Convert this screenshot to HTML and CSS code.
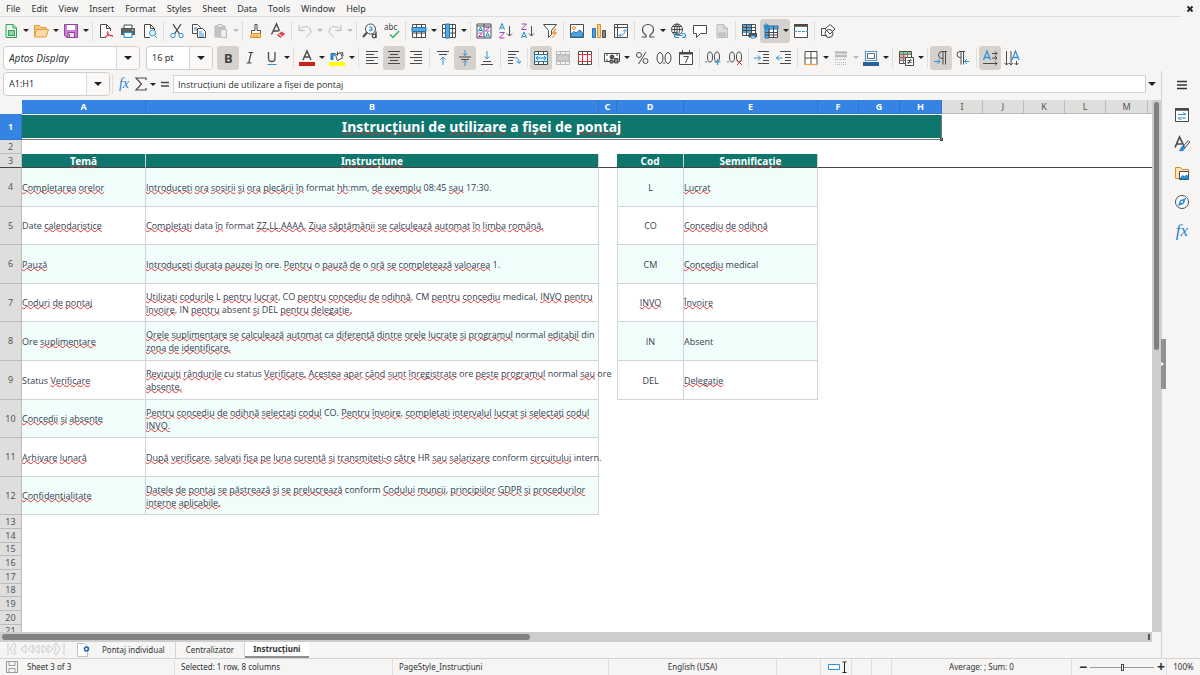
FILE: index.html
```html
<!DOCTYPE html>
<html lang="ro">
<head>
<meta charset="utf-8">
<title>Instrucțiuni</title>
<link rel="stylesheet" href="styles.css">
</head>
<body>
<header class="menubar">
  <nav class="menus">
    <button>File</button><button>Edit</button><button>View</button><button>Insert</button><button>Format</button><button>Styles</button><button>Sheet</button><button>Data</button><button>Tools</button><button>Window</button><button>Help</button>
  </nav>
  <button class="close" aria-label="Close"><svg viewBox="0 0 8 8"><path d="M1.500 1.500l5 5M6.500 1.500l-5 5" stroke="#222" stroke-width="1.800"/></svg></button>
</header>

<div class="toolbar standard">
  <button class="tool" aria-label="New"><svg viewBox="0 0 16 16"><path d="M3 1.500h7l3.500 3.500v9.500H3z" fill="#e9f7ee" stroke="#2da44e"/><path d="M10 1.500v3.500h3.500" stroke="#2da44e"/><path d="M5 7h7v6H5z" fill="#2da44e" stroke="none"/><path d="M6 9h5M6 11h5" stroke="#fff"/></svg></button><button class="caret" aria-label="More"></button>
  <button class="tool" aria-label="Open"><svg viewBox="0 0 16 16"><path d="M1.500 13.500v-11h5l1.500 2h5v2" fill="#f6c783" stroke="#e39b33"/><path d="M3.500 6.500h12l-2.500 7.500H1.500z" fill="#fbdba8" stroke="#e39b33"/></svg></button><button class="caret" aria-label="More"></button>
  <button class="tool" aria-label="Save"><svg viewBox="0 0 16 16"><path d="M1.500 1.500h13v13h-11l-2-2z" fill="#c583d0" stroke="#94409f"/><path d="M4 2h8v5H4z" fill="#fff" stroke="none"/><path d="M5 9.500h6.500v5H5z" fill="#f3e3f6" stroke="#94409f"/><path d="M6.500 11v3" stroke="#94409f"/></svg></button><button class="caret" aria-label="More"></button>
  <i class="sep"></i>
  <button class="tool" aria-label="Export as PDF"><svg viewBox="0 0 16 16"><path d="M8 14.500H2.500v-13h6l4 4V8M8.500 1.500v4h4" fill="#fff"/><path d="M7 14.500c3-2 4-6 2.500-6s0 4.500 5.500 4.500c-3-1.500-6-.5-8 1.500" stroke="#d9333f"/></svg></button>
  <button class="tool" aria-label="Print"><svg viewBox="0 0 16 16"><path d="M4 5V2h8v3" fill="#fff"/><path d="M1.500 5.500h13v6h-13z" fill="#5d6468" stroke="#4f565b"/><path d="M4 9.500h8v5H4z" fill="#eaf5fc" stroke="#2f8fd0"/><path d="M12 7h1.500" stroke="#fff"/></svg></button>
  <button class="tool" aria-label="Print Preview"><svg viewBox="0 0 16 16"><path d="M12.500 7V5.500l-4-4h-6v13H8M8.500 1.500v4h4" fill="#fff"/><circle cx="10.500" cy="10" r="3" fill="#e4f3fc" stroke="#2f93d6"/><path d="M12.500 12.500l2.500 2.500" stroke="#2f93d6"/></svg></button>
  <i class="sep"></i>
  <button class="tool" aria-label="Cut"><svg viewBox="0 0 16 16"><path d="M4 1l6.500 10M12 1L5.500 11" stroke-width="1.300"/><circle cx="4" cy="12.500" r="2.200" stroke="#2f93d6"/><circle cx="12" cy="12.500" r="2.200" stroke="#2f93d6"/></svg></button>
  <button class="tool" aria-label="Copy"><svg viewBox="0 0 16 16"><path d="M1.500 1.500h5l3 3v6h-8z" fill="#fff"/><path d="M6.500 5.500h5l3 3v6h-8z" fill="#fff"/><path d="M3 5h3M3 7h3M8 9h3M8 11h5M8 13h5" stroke="#2f93d6"/></svg></button>
  <button class="tool off" aria-label="Paste"><svg viewBox="0 0 16 16"><path d="M2 3h10v11H2z" fill="#c6c4c2"/><path d="M5 1.500h4v3H5z" fill="#eee"/><path d="M7.500 6.500h6v8h-6z" fill="#eee"/></svg></button><button class="caret off" aria-label="More"></button>
  <i class="sep"></i>
  <button class="tool" aria-label="Clone Formatting"><svg viewBox="0 0 16 16"><path d="M7 1.500h2v6h3.500v3h-9v-3H7z" fill="#fff"/><path d="M3.500 10.500h9v4h-10z" fill="#f9cf8d" stroke="#e08d1f"/><path d="M6 12v2M9 12v2" stroke="#e08d1f"/></svg></button>
  <button class="tool" aria-label="Clear Direct Formatting"><svg viewBox="0 0 16 16"><path d="M1.500 11.500L6.500 1 9.500 8M3.500 8h5" stroke-width="1.400"/><path d="M7.500 12l4-3 3 2-4 3.500z" fill="#e2454f" stroke="#e2454f"/><path d="M9 11l3 2.500" stroke="#fff"/></svg></button>
  <i class="sep"></i>
  <button class="tool off" aria-label="Undo"><svg viewBox="0 0 16 16"><path d="M2 2v5.500h5.500M2 7.500C5 3 10 2.500 12.500 5s1.500 6-3.500 9"/></svg></button><button class="caret off" aria-label="More"></button>
  <button class="tool off" aria-label="Redo"><svg viewBox="0 0 16 16"><path d="M14 2v5.500H8.500M14 7.500C11 3 6 2.500 3.500 5s-1.500 6 3.500 9"/></svg></button><button class="caret off" aria-label="More"></button>
  <i class="sep"></i>
  <button class="tool" aria-label="Find and Replace"><svg viewBox="0 0 16 16"><circle cx="8.500" cy="6" r="5" fill="#fff"/><path d="M5 9.500L1 14" stroke-width="2"/><path d="M7 4.500c1-1 3-1 3 .5v3M10 6c-3-.3-3.500 2-1.800 2 .8 0 1.500-.5 1.800-1" stroke="#1e8bcd"/><path d="M14 8.500v6.500" stroke-width="1.400"/><circle cx="12" cy="13" r="1.800" fill="#f6f5f4" stroke-width="1.300"/></svg></button>
  <button class="tool" aria-label="Spelling"><svg viewBox="0 0 16 16"><text x="0" y="7" font-size="8">abc</text><path d="M6 11.500l3 3L15 8" stroke="#27b35c" stroke-width="1.400"/></svg></button>
  <i class="sep"></i>
  <button class="tool" aria-label="Row"><svg viewBox="0 0 16 16"><path d="M1.500 1.500h13v13h-13zM1.500 10h13M5.500 1.500v13M10.500 1.500v13" fill="#fff"/><path d="M1 4.500h14v4H1z" fill="#58a9df" stroke="#1e74b8"/></svg></button><button class="caret" aria-label="More"></button>
  <button class="tool" aria-label="Column"><svg viewBox="0 0 16 16"><path d="M1.500 1.500h13v13h-13zM1.500 5.500h13M1.500 10h13M11.500 1.500v13" fill="#fff"/><path d="M4.500 1h4v14h-4z" fill="#58a9df" stroke="#1e74b8"/></svg></button><button class="caret" aria-label="More"></button>
  <i class="sep"></i>
  <button class="tool" aria-label="Sort"><svg viewBox="0 0 16 16"><path d="M1 3V1h14v14H1V3h14M8 1v14" fill="#fff"/><path d="M2.500 8.500L4.500 4l2 4.500M3 7.500h3M9.500 14L11.500 9.500l2 4.500M10 13h3" stroke="#1e8bcd"/><path d="M2.500 10h4l-4 3.500h4M9.500 4.500h4l-4 3.500h4" stroke="#a844b8"/></svg></button>
  <button class="tool" aria-label="Sort Ascending"><svg viewBox="0 0 16 16"><path d="M1.500 6.500L4 .5l2.500 6M2.500 5h3" stroke="#1e8bcd"/><path d="M1.500 9.500h5l-5 5.500h5" stroke="#a844b8"/><path d="M11.500 3v10M9 10.500l2.500 2.500 2.500-2.500"/></svg></button>
  <button class="tool" aria-label="Sort Descending"><svg viewBox="0 0 16 16"><path d="M1.500 15L4 9l2.500 6M2.500 13.500h3" stroke="#1e8bcd"/><path d="M1.500 1h5l-5 5.500h5" stroke="#a844b8"/><path d="M11.500 3v10M9 10.500l2.500 2.500 2.500-2.500"/></svg></button>
  <button class="tool" aria-label="AutoFilter"><svg viewBox="0 0 16 16"><path d="M1.500 1.500h13l-5 6v4l-3 3v-7z" fill="#fff"/><path d="M13 6l-3 4.500h3L10 15l5-5.500h-3L14 6z" fill="#f28c28" stroke="#f28c28" stroke-width=".5"/></svg></button>
  <i class="sep"></i>
  <button class="tool" aria-label="Insert Image"><svg viewBox="0 0 16 16"><path d="M1.500 1.500h13v13h-13z" fill="#fff"/><circle cx="5" cy="5" r="1.500" stroke="#f28c28"/><path d="M2 14v-3l3-2.500 2 1.500 4-3 3 4v3z" fill="#4fa3dc" stroke="#1e74b8"/></svg></button>
  <button class="tool" aria-label="Insert Chart"><svg viewBox="0 0 16 16"><path d="M1.500 5.500h3v9h-3z" fill="#4fa3dc" stroke="#1e74b8"/><path d="M6.500 1.500h3v13h-3z" fill="#f9cf8d" stroke="#e08d1f"/><path d="M11.500 7.500h3v7h-3z" fill="#888"/></svg></button>
  <button class="tool" aria-label="Pivot Table"><svg viewBox="0 0 16 16"><path d="M1.500 1.500h13v13h-13zM1.500 4.500h13M4.500 1.500v13" fill="#fff"/><path d="M6.500 12.500c4 0 5.500-2 5.500-5.500M10 8.500L12 6.500l2 2M8 10.500l-2 2 2 2" stroke="#2f93d6"/></svg></button>
  <i class="sep"></i>
  <button class="tool" aria-label="Special Character"><svg viewBox="0 0 16 16"><path d="M1.500 14h4.500v-2C3.500 10.500 2.500 9 2.500 6.500c0-3 2.300-5 5.500-5s5.500 2 5.500 5c0 2.500-1 4-3.500 5.500v2h4.500" stroke-width="1.200"/></svg></button><button class="caret" aria-label="More"></button>
  <button class="tool" aria-label="Hyperlink"><svg viewBox="0 0 16 16"><circle cx="7" cy="6.500" r="5.500"/><path d="M1.500 6.500h11M7 1v10M3 3.500h8M3 9.500h4"/><ellipse cx="7" cy="6.500" rx="2.500" ry="5.500"/><path d="M9 10.500H6.500a2 2 0 0 0 0 4H9m3-4h1.500a2 2 0 0 1 0 4H12M8.500 12.500h4" stroke="#2f93d6" stroke-width="1.200"/></svg></button>
  <button class="tool" aria-label="Comment"><svg viewBox="0 0 16 16"><path d="M1.500 2.500h13v8h-6l-4 4v-4h-3z" fill="#fff"/></svg></button>
  <button class="tool off" aria-label="Headers and Footers"><svg viewBox="0 0 16 16"><path d="M3 1.500h6.500l4 4v9H3z" fill="#ddd"/><path d="M9.500 1.500v4h4"/><path d="M5 10h6.500v3H5z" fill="#c6c4c2"/></svg></button>
  <i class="sep"></i>
  <button class="tool" aria-label="Define Print Area"><svg viewBox="0 0 16 16"><path d="M1.500 1.500h13v11h-13z" fill="#fff"/><path d="M2 2h9v8H2z" fill="#58a9df" stroke="none"/><path d="M1.500 4.500h13M1.500 7.500h13M5.500 1.500v11M10.500 1.500v9"/><path d="M8 10.500h7.500v3.500H8z" fill="#4f565b"/><path d="M10 13h4v2h-4z" fill="#fff" stroke="#2f8fd0"/></svg></button>
  <span class="pair on"><button class="tool" aria-label="Freeze Rows and Columns"><svg viewBox="0 0 16 16"><path d="M2.500 3.500h12v11h-12z" fill="#fff"/><path d="M2 3h13v3H2zM2 3h4v12H2z" fill="#58a9df" stroke="#1e74b8"/><path d="M2 9.500h13M2 12h13M10.500 3v12M6 6v9"/><path d="M3 0v6M0 3h6M1 1l4 4M5 1L1 5" stroke="#1e8bcd" stroke-width=".8"/></svg></button><button class="caret" aria-label="More"></button></span>
  <button class="tool" aria-label="Split Window"><svg viewBox="0 0 16 16"><path d="M1.500 1.500h13v13h-13z" fill="#fff"/><path d="M1 2.500h14" stroke-width="2.500"/><path d="M1 8.500h14" stroke="#2f93d6" stroke-dasharray="3 1"/></svg></button>
  <i class="sep"></i>
  <button class="tool" aria-label="Show Draw Functions"><svg viewBox="0 0 16 16"><path d="M7 12.500H1.500v-7h4"/><path d="M10 1.500l5 4.500-5 5-5-5z" fill="#f6f5f4"/><circle cx="9" cy="10.500" r="4"/></svg></button>
</div>

<div class="toolbar formatting">
  <div class="combo font"><input aria-label="Font Name" value="Aptos Display"><button class="caret" aria-label="Fonts"></button></div>
  <div class="combo size"><input aria-label="Font Size" value="16 pt"><button class="caret" aria-label="Sizes"></button></div>
  <button class="tool on" aria-label="Bold"><svg viewBox="0 0 16 16"><text x="4" y="13" font-size="13" font-weight="700">B</text></svg></button>
  <button class="tool" aria-label="Italic"><svg viewBox="0 0 16 16"><path d="M6.500 2.500h5M4.500 13h5M9.200 2.500L6.800 13" stroke-width="1.200"/></svg></button>
  <button class="tool" aria-label="Underline"><svg viewBox="0 0 16 16"><path d="M4.500 2v6.500c0 4 6.500 4 6.500 0V2" stroke-width="1.300"/><path d="M3.500 14.500h9" stroke="#2f93d6"/></svg></button><button class="caret" aria-label="More"></button>
  <i class="sep"></i>
  <button class="tool" aria-label="Font Color"><svg viewBox="0 0 16 16"><path d="M4 10L8 1l4 9M5.500 7h5" stroke-width="1.500"/><path d="M0 12h16v4H0z" fill="#c9211e" stroke="none"/></svg></button><button class="caret" aria-label="More"></button>
  <button class="tool" aria-label="Background Color"><svg viewBox="0 0 16 16"><path d="M6.500 5l5-2.500L13.500 8 8.500 10.500z" fill="#fff"/><path d="M8.500 5.500V1.500M12 3.500l1.500-1.500.5 4"/><path d="M2 9.500V3.500h4.500L4 6.500v3z" fill="#2f93d6" stroke="#1e74b8"/><path d="M0 12h16v4H0z" fill="#ffff00" stroke="none"/></svg></button><button class="caret" aria-label="More"></button>
  <i class="sep"></i>
  <button class="tool" aria-label="Align Left"><svg viewBox="0 0 16 16"><path d="M2 1.500h12M2 4.500h8M2 7.500h12M2 10.500h8M2 13.500h12"/></svg></button>
  <button class="tool on" aria-label="Center Horizontally"><svg viewBox="0 0 16 16"><path d="M2 1.500h12M4 4.500h8M2 7.500h12M4 10.500h8M2 13.500h12"/></svg></button>
  <button class="tool" aria-label="Align Right"><svg viewBox="0 0 16 16"><path d="M2 1.500h12M6 4.500h8M2 7.500h12M6 10.500h8M2 13.500h12"/></svg></button>
  <i class="sep"></i>
  <button class="tool" aria-label="Align Top"><svg viewBox="0 0 16 16"><path d="M2 1.500h12M4 4.500h8"/><path d="M8 15V7M5.500 9.500L8 7l2.500 2.500" stroke="#2f93d6"/></svg></button>
  <button class="tool on" aria-label="Center Vertically"><svg viewBox="0 0 16 16"><path d="M2 7h12M4 9.500h8"/><path d="M8 0v5.500M6 3.500l2 2 2-2M8 16v-5.500M6 12.500l2-2 2 2" stroke="#2f93d6"/></svg></button>
  <button class="tool" aria-label="Align Bottom"><svg viewBox="0 0 16 16"><path d="M4 11.500h8M2 14.500h12"/><path d="M8 1v8M5.500 6.500L8 9l2.500-2.500" stroke="#2f93d6"/></svg></button>
  <i class="sep"></i>
  <button class="tool" aria-label="Wrap Text"><svg viewBox="0 0 16 16"><path d="M2 1.500h11M2 4.500h8M2 7.500h6M2 10.500h5M2 13.500h5"/><path d="M8 8c4-1 5 1 5 5M10.500 11L13 13.500 15 11" stroke="#2f93d6"/></svg></button>
  <i class="sep"></i>
  <button class="tool on" aria-label="Merge and Center Cells"><svg viewBox="0 0 16 16"><path d="M1.500 1.500h13v13h-13zM1.500 4.500h13M1.500 11.500h13M5.500 1.500v3M10.500 1.500v3M5.500 11.500v3M10.500 11.500v3" fill="#fff"/><path d="M1.500 4.500h13v7h-13z" fill="#dff0fb" stroke="#1e74b8"/><path d="M3 8h10M5 6L3 8l2 2M11 6l2 2-2 2" stroke="#1e8bcd"/></svg></button>
  <button class="tool off" aria-label="Merge Cells"><svg viewBox="0 0 16 16"><path d="M1.500 1.500h13v13h-13zM1.500 4.500h13M1.500 11.500h13M5.500 1.500v3M10.500 1.500v3M5.500 11.500v3M10.500 11.500v3"/><path d="M2 5h12v6H2z" fill="#ccc"/></svg></button>
  <button class="tool" aria-label="Unmerge Cells"><svg viewBox="0 0 16 16"><path d="M1.500 1.500h13v13h-13zM5.500 1.500v13M10.500 1.500v13" fill="#fff"/><path d="M1.500 4.500h13v7h-13zM5.500 4.500v7M10.500 4.500v7" fill="#fff" stroke="#d9333f"/></svg></button>
  <i class="sep"></i>
  <button class="tool" aria-label="Format as Currency"><svg viewBox="0 0 16 16"><path d="M.5 3.500h15v8H.5z" fill="#fff"/><circle cx="8" cy="7" r="2" fill="#555"/><path d="M2 5h2M12 5h2M2 10h2"/><path d="M6 13V10h3v3zM10.500 13V8.500h3.500V13z" fill="#888"/></svg></button><button class="caret" aria-label="More"></button>
  <button class="tool" aria-label="Format as Percent"><svg viewBox="0 0 16 16"><circle cx="5" cy="5" r="2.500"/><circle cx="11.500" cy="11" r="2.500"/><path d="M12 2L4.500 14"/></svg></button>
  <button class="tool" aria-label="Format as Number"><svg viewBox="0 0 16 16"><ellipse cx="4" cy="8" rx="3" ry="5.500"/><ellipse cx="12" cy="8" rx="3" ry="5.500"/><path d="M8 12v2"/></svg></button>
  <button class="tool" aria-label="Format as Date"><svg viewBox="0 0 16 16"><path d="M1.500 2.500h13v12h-13zM4.500 0v3M11.500 0v3" fill="#fff"/><path d="M1 3.500h14" stroke-width="2"/><path d="M5.500 6.500h5L7.500 13"/></svg></button>
  <i class="sep"></i>
  <button class="tool" aria-label="Add Decimal Place"><svg viewBox="0 0 16 16"><ellipse cx="5" cy="7" rx="2.500" ry="5"/><ellipse cx="12" cy="7" rx="2.500" ry="5"/><path d="M1 11v1.500"/><path d="M12.500 9v6M9.500 12h6" stroke="#2f93d6" stroke-width="1.200"/></svg></button>
  <button class="tool" aria-label="Delete Decimal Place"><svg viewBox="0 0 16 16"><ellipse cx="5" cy="7" rx="2.500" ry="5"/><ellipse cx="12" cy="7" rx="2.500" ry="5"/><path d="M1 11v1.500"/><path d="M10 10l5 5M15 10l-5 5" stroke="#d9333f"/></svg></button>
  <i class="sep"></i>
  <button class="tool" aria-label="Increase Indent"><svg viewBox="0 0 16 16"><path d="M4 1.500h11M9 4.500h6M9 7.500h6M9 10.500h6M4 13.500h11"/><path d="M0 8h6.500M4 5.500L6.500 8 4 10.500" stroke="#2f93d6"/></svg></button>
  <button class="tool" aria-label="Decrease Indent"><svg viewBox="0 0 16 16"><path d="M4 1.500h11M9 4.500h6M9 7.500h6M9 10.500h6M4 13.500h11"/><path d="M0 8h6.500M3 5.500L.5 8 3 10.500" stroke="#2f93d6"/></svg></button>
  <i class="sep"></i>
  <button class="tool" aria-label="Borders"><svg viewBox="0 0 16 16"><path d="M2 14.500v-13h12v13M8 1.500v13M2 8h12" fill="#fff"/><path d="M1.500 14.500h13" stroke="#f0a347" stroke-width="1.300"/></svg></button><button class="caret" aria-label="More"></button>
  <button class="tool off" aria-label="Border Style"><svg viewBox="0 0 16 16"><path d="M2 2.500h12M2 6h12" stroke-width="2.500"/><path d="M2 9.500h12" stroke-dasharray="3 1"/><path d="M2 12.500h12M2 14.500h12" stroke-dasharray="1 1"/></svg></button><button class="caret off" aria-label="More"></button>
  <button class="tool" aria-label="Border Color"><svg viewBox="0 0 16 16"><path d="M2.500 1.500h11v9h-11z" fill="#fff" stroke="#4a9ad0" stroke-width="1.200"/><path d="M4.500 3.500h7v5h-7z" fill="#fff" stroke="#666"/><path d="M0 12h16v4H0z" fill="#2a6099" stroke="none"/></svg></button><button class="caret" aria-label="More"></button>
  <i class="sep"></i>
  <button class="tool" aria-label="Conditional"><svg viewBox="0 0 16 16"><path d="M1.500 1.500h12v12h-12z" fill="#fff"/><path d="M2 2h11v3H2z" fill="#7fd191" stroke="none"/><path d="M2 5h6v5H2z" fill="#f7a79f" stroke="none"/><path d="M1.500 4.500h12M1.500 7.500h12M1.500 10.500h12M5.500 1.500v12M9.500 1.500v12" stroke="#777"/><path d="M7.500 7.500h8v8h-8z" fill="#fff"/><path d="M9.500 10.500h4M9.500 12.500h4M13 9l-3 5"/></svg></button><button class="caret" aria-label="More"></button>
  <i class="sep"></i>
  <button class="tool on" aria-label="Left-To-Right"><svg viewBox="0 0 16 16"><path d="M14 1.500H9a3.500 3.500 0 0 0 0 7h1M10 1.500v13M12.500 1.500v13"/><path d="M1 11.500h6M4.500 9L7 11.500 4.500 14" stroke="#2f93d6"/></svg></button>
  <button class="tool" aria-label="Right-To-Left"><svg viewBox="0 0 16 16"><path d="M10 1.500H5a3 3 0 0 0 0 6h1M6 1.500v13M8.500 1.500v13"/><path d="M14.500 11.500h-5M12 9l-2.500 2.500L12 14" stroke="#2f93d6"/></svg></button>
  <i class="sep"></i>
  <button class="tool on" aria-label="Text direction from left to right"><svg viewBox="0 0 16 16"><path d="M1.500 10L5 1l3.500 9M2.500 7.500h5" stroke="#2f93d6" stroke-width="1.300"/><path d="M10 3.500h5M13 1.500l2 2-2 2M10 8h5M13 6l2 2-2 2M1 13.500h14M13 11.500l2 2-2 2"/></svg></button>
  <button class="tool" aria-label="Text direction from top to bottom"><svg viewBox="0 0 16 16"><path d="M8 10l3.500-9L15 10M9 7.500h5" stroke="#2f93d6" stroke-width="1.300"/><path d="M2.500 1v14M.5 13l2 2 2-2M7 1v14M5 13l2 2 2-2M12.500 11v4M10.500 13l2 2 2-2"/></svg></button>
</div>

<main class="work">
  <section class="document">
    <div class="formula">
      <div class="combo name"><input aria-label="Name Box" value="A1:H1"><button class="caret" aria-label="Names"></button></div>
      <i class="sep"></i>
      <button class="fx" aria-label="Function Wizard">fx</button>
      <button class="tool" aria-label="Sum"><svg viewBox="0 0 16 16"><path d="M13 4V2H3l5.500 6L3 14h10v-2" stroke-width="1.200"/></svg></button><button class="caret" aria-label="More"></button>
      <button class="tool" aria-label="Formula"><svg viewBox="0 0 16 16"><path d="M4 6.500h8M4 10h8" stroke-width="1.500"/></svg></button>
      <input class="line" aria-label="Input line" value="Instrucțiuni de utilizare a fișei de pontaj">
      <button class="caret" aria-label="Expand"></button>
    </div>

    <div class="view">
      <div class="sheet">
        <table>
          <colgroup><col class="c-head"><col class="c-a"><col class="c-b"><col class="c-c"><col class="c-d"><col class="c-e"><col class="c-n"><col class="c-n"><col class="c-w"><col class="c-n"><col class="c-n"><col class="c-n"><col class="c-n"><col class="c-w"><col class="c-n"></colgroup>
          <thead>
            <tr><th class="corner"></th><th class="sel">A</th><th class="sel">B</th><th class="sel">C</th><th class="sel">D</th><th class="sel">E</th><th class="sel">F</th><th class="sel">G</th><th class="sel">H</th><th>I</th><th>J</th><th>K</th><th>L</th><th>M</th><th></th></tr>
          </thead>
          <tbody class="frozen">
            <tr class="banner"><th class="sel">1</th><td colspan="8" class="title"><u>Instrucțiuni</u> de <u>utilizare</u> a <u>fișei</u> de <u>pontaj</u></td></tr>
            <tr><th>2</th></tr>
            <tr class="heads"><th>3</th><td class="head"><u>Temă</u></td><td class="head"><u>Instrucțiune</u></td><td></td><td class="head">Cod</td><td class="head"><u>Semnificație</u></td><td colspan="9"></td></tr>
          </tbody>
          <tbody class="records">
            <tr><th>4</th><td class="cell"><u>Completarea</u> <u>orelor</u></td><td class="cell"><u>Introduceți</u> <u>ora</u> <u>sosirii</u> <u>și</u> <u>ora</u> <u>plecării</u> <u>în</u> format <u>hh</u>:mm, <u>de</u> <u>exemplu</u> 08:45 <u>sau</u> 17:30.</td><td></td><td class="cell code">L</td><td class="cell"><u>Lucrat</u></td></tr>
            <tr><th>5</th><td class="cell">Date <u>calendaristice</u></td><td class="cell"><u>Completați</u> data <u>în</u> format <u>ZZ.LL.AAAA.</u> <u>Ziua</u> <u>săptămânii</u> <u>se</u> <u>calculează</u> <u>automat</u> <u>în</u> <u>limba</u> <u>română.</u></td><td></td><td class="cell code">CO</td><td class="cell"><u>Concediu</u> <u>de</u> <u>odihnă</u></td></tr>
            <tr><th>6</th><td class="cell"><u>Pauză</u></td><td class="cell"><u>Introduceți</u> <u>durata</u> <u>pauzei</u> <u>în</u> ore. <u>Pentru</u> o <u>pauză</u> <u>de</u> o <u>oră</u> <u>se</u> <u>completează</u> <u>valoarea</u> 1.</td><td></td><td class="cell code">CM</td><td class="cell"><u>Concediu</u> medical</td></tr>
            <tr><th>7</th><td class="cell"><u>Coduri</u> <u>de</u> <u>pontaj</u></td><td class="cell"><u>Utilizați</u> <u>codurile</u> L <u>pentru</u> <u>lucrat</u>, CO <u>pentru</u> <u>concediu</u> <u>de</u> <u>odihnă</u>, CM <u>pentru</u> <u>concediu</u> medical, <u>INVO</u> <u>pentru</u><br><u>învoire</u>, IN <u>pentru</u> absent <u>și</u> DEL <u>pentru</u> <u>delegație.</u></td><td></td><td class="cell code"><u>INVO</u></td><td class="cell"><u>Învoire</u></td></tr>
            <tr><th>8</th><td class="cell">Ore <u>suplimentare</u></td><td class="cell"><u>Orele</u> <u>suplimentare</u> <u>se</u> <u>calculează</u> <u>automat</u> ca <u>diferență</u> <u>dintre</u> <u>orele</u> <u>lucrate</u> <u>și</u> <u>programul</u> normal <u>editabil</u> din<br><u>zona</u> <u>de</u> <u>identificare.</u></td><td></td><td class="cell code">IN</td><td class="cell">Absent</td></tr>
            <tr><th>9</th><td class="cell">Status <u>Verificare</u></td><td class="cell"><u>Revizuiți</u> <u>rândurile</u> cu status <u>Verificare.</u> <u>Acestea</u> <u>apar</u> <u>când</u> <u>sunt</u> <u>înregistrate</u> ore <u>peste</u> <u>programul</u> normal <u>sau</u> ore<br><u>absente.</u></td><td></td><td class="cell code">DEL</td><td class="cell"><u>Delegație</u></td></tr>
            <tr><th>10</th><td class="cell"><u>Concedii</u> <u>și</u> <u>absențe</u></td><td class="cell"><u>Pentru</u> <u>concediu</u> <u>de</u> <u>odihnă</u> <u>selectați</u> <u>codul</u> CO. <u>Pentru</u> <u>învoire</u>, <u>completați</u> <u>intervalul</u> <u>lucrat</u> <u>și</u> <u>selectați</u> <u>codul</u><br><u>INVO.</u></td></tr>
            <tr><th>11</th><td class="cell"><u>Arhivare</u> <u>lunară</u></td><td class="cell"><u>După</u> <u>verificare</u>, <u>salvați</u> <u>fișa</u> <u>pe</u> <u>luna</u> <u>curentă</u> <u>și</u> <u>transmiteți-o</u> <u>către</u> HR <u>sau</u> <u>salarizare</u> conform <u>circuitului</u> intern.</td></tr>
            <tr><th>12</th><td class="cell"><u>Confidențialitate</u></td><td class="cell"><u>Datele</u> <u>de</u> <u>pontaj</u> <u>se</u> <u>păstrează</u> <u>și</u> <u>se</u> <u>prelucrează</u> conform <u>Codului</u> <u>muncii</u>, <u>principiilor</u> <u>GDPR</u> <u>și</u> <u>procedurilor</u><br><u>interne</u> <u>aplicabile.</u></td></tr>
          </tbody>
          <tbody class="blank">
            <tr><th>13</th></tr><tr><th>14</th></tr><tr><th>15</th></tr><tr><th>16</th></tr><tr><th>17</th></tr><tr><th>18</th></tr><tr><th>19</th></tr><tr><th>20</th></tr><tr><th>21</th></tr>
          </tbody>
        </table>
      </div>
      <div class="vscroll"><div class="thumb"></div></div>
    </div>
    <div class="hscroll"><div class="thumb"></div><i class="stop"></i></div>

    <nav class="tabs">
      <span class="arrows"><svg viewBox="0 0 60 14"><path d="M2 1v12M8 1L4 7l4 6 2-2-2-4 2-4zM20 3l-5 4 5 4zM27 3l-5 4 5 4zM33 3l-5 4 5 4zM36 3l5 4-5 4zM42 3l5 4-5 4zM50 1l4 6-4 6-2-2 2-4-2-4zM58 1v12"/></svg></span>
      <button class="add" aria-label="Add Sheet"><svg viewBox="0 0 16 16"><path d="M2.500 1.500h7l3 3v10h-10z" fill="#fff" stroke="#c4c2c0"/><circle cx="11.500" cy="7" r="2" stroke="#1e62b8" stroke-width="1.500"/></svg></button>
      <button class="tab">Pontaj individual</button><button class="tab">Centralizator</button><button class="tab current">Instrucțiuni</button>
    </nav>
  </section>

  <aside class="sidebar">
    <button class="settings" aria-label="Sidebar Settings"><svg viewBox="0 0 16 16"><path d="M3 4.500h10M3 8h10M3 11.500h10" stroke="#2e3436" stroke-width="1.400"/></svg></button>
    <button aria-label="Properties"><svg viewBox="0 0 16 16"><path d="M1.500 1.500h13v13h-13z" fill="#fff"/><path d="M1 2.500h14" stroke-width="2.500"/><path d="M4 7.500h8M9 5.500l3 2M4 11h8M4 11l3 2" stroke="#2f93d6"/></svg></button>
    <button aria-label="Styles"><svg viewBox="0 0 16 16"><path d="M1 11.500L5.500 1 10 10M3 8h5" stroke-width="1.600"/><path d="M9.500 10l4-4.500c2-1 2.500 0 1.500 1.500l-4 4.500z" fill="#fff"/><path d="M5.500 14.500c2 .5 5 0 5.500-3L9.500 10c-2.500 0-2 3-4 4.500z" fill="#2f93d6" stroke="#1e74b8"/></svg></button>
    <button aria-label="Gallery"><svg viewBox="0 0 16 16"><path d="M5 13.500H1.500v-11h5l1.500 2h6.500v2" fill="#fbe3bf" stroke="#e08d1f"/><path d="M5.500 6.500h9v8h-9z" fill="#fff"/><path d="M6 14l2.500-3.500 2 1.500 2-2 2 2v2z" fill="#2f93d6" stroke="#1e74b8"/></svg></button>
    <button aria-label="Navigator"><svg viewBox="0 0 16 16"><circle cx="8" cy="8" r="6.500" fill="#fff"/><path d="M11.500 4.500L9.500 9.500l-5 2 2-5z" fill="#2f93d6" stroke="#2f93d6"/><circle cx="8" cy="8" r="1" fill="#fff" stroke="none"/></svg></button>
    <button class="fx" aria-label="Functions">fx</button>
    <i class="handle"></i>
  </aside>
</main>

<footer class="status">
  <span class="sheets"><svg viewBox="0 0 16 16"><path d="M2.500 2.500h11v11h-11zM5 2.500v4h6v-4M5 13.500v-4h6v4" stroke="#9b9b9b"/></svg>Sheet 3 of 3</span>
  <span>Selected: 1 row, 8 columns</span>
  <span>PageStyle_Instrucțiuni</span>
  <span class="mid">English (USA)</span>
  <span></span>
  <span class="mode"><svg viewBox="0 0 24 14"><path d="M1.500 4.500h11v5h-11z" stroke="#2f93d6" fill="#fff"/><path d="M17.500 2.500v10M15.500 2h4M15.500 12.500h4" stroke="#222"/></svg></span>
  <span></span>
  <span></span>
  <span class="mid">Average: ; Sum: 0</span>
  <span class="zoom"><button aria-label="Zoom out">−</button><input type="range" aria-label="Zoom" value="50"><button aria-label="Zoom in">+</button></span>
  <span class="mid">100%</span>
</footer>
</body>
</html>
```
FILE: styles.css
```css
* { box-sizing: border-box; }

body {
  margin: 0;
  height: 100vh;
  display: flex;
  flex-direction: column;
  overflow: hidden;
  background: #f6f5f4;
  color: #2e3436;
  font: 9px/12px "Noto Sans", "Open Sans", sans-serif;
}

button, input {
  margin: 0;
  padding: 0;
  border: 0;
  background: none;
  color: inherit;
  font: inherit;
  min-width: 0;
}

svg {
  display: block;
  width: 16px;
  height: 16px;
  flex: none;
  overflow: visible;
  fill: none;
  stroke: #4a4a4a;
  stroke-width: 1;
}

svg text { stroke: none; fill: #444; }

/* Menu bar */
.menubar {
  height: 17px;
  flex: none;
  display: flex;
  align-items: stretch;
}
.menus {
  flex: 1;
  display: flex;
  gap: 11px;
  padding: 1px 0 0 6px;
  border-bottom: 1px solid #dedcda;
}
.close { width: 17px; margin-right: 2px; display: grid; place-items: center; }
.close svg { width: 8px; height: 8px; }

/* Toolbars */
.toolbar {
  flex: none;
  height: 27px;
  display: flex;
  align-items: center;
}
.tool {
  width: 22px;
  height: 24px;
  flex: none;
  display: grid;
  place-items: center;
  border-radius: 3px;
}
.pair { display: flex; border-radius: 3px; }
.on { background: #d5d1cd; }
.tool.off svg { stroke: #bdbbb9; }
.sep {
  width: 1px;
  height: 20px;
  margin: 0 2px;
  flex: none;
  background: #e0dedc;
}
.caret {
  width: 8px;
  height: 24px;
  flex: none;
  display: grid;
  place-items: center;
}
.caret::before {
  content: "";
  border: solid transparent;
  border-width: 3px 3px 0;
  border-top-color: #222;
}
.caret.off::before { border-top-color: #bdbbb9; }

.combo {
  display: flex;
  height: 24px;
  flex: none;
  border: 1px solid #cfccc9;
  border-radius: 4px;
  background: #fff;
  overflow: hidden;
}
.combo input { flex: 1; padding-left: 5px; font-size: 9px; }
.combo .caret {
  width: 23px;
  height: 22px;
  border-left: 1px solid #dcdad8;
  background: #faf9f8;
}
.combo .caret::before, .formula > .line + .caret::before {
  border-width: 4px 4px 0;
}
.font { width: 137px; margin: 0 6px 0 3px; }
.font input { font-size: 10px; font-style: italic; }
.size { width: 67px; margin-right: 4px; }

/* Document and sidebar */
.work { flex: 1; min-height: 0; display: flex; }
.document {
  flex: 1;
  min-width: 0;
  display: flex;
  flex-direction: column;
}
.formula {
  flex: none;
  height: 29px;
  padding: 0 5px 3px 3px;
  display: flex;
  align-items: center;
}
.name { width: 107px; }
.fx {
  width: 18px;
  color: #1e7fd0;
  font: italic 14px/16px "Liberation Serif", serif;
}
.formula .tool { width: 16px; }
.line {
  flex: 1;
  height: 18px;
  padding-left: 4px;
  border: 1px solid #d5d3d1;
  background: #fff;
  margin-right: 2px;
  font-family: "Open Sans", "Noto Sans", sans-serif;
}

.view { flex: 1; min-height: 0; display: flex; }
.sheet { flex: 1; min-width: 0; overflow: hidden; background: #fff; }

table {
  width: 1188px;
  table-layout: fixed;
  border-collapse: separate;
  border-spacing: 0;
}
.c-head { width: 22px; }
.c-a { width: 124px; }
.c-b { width: 453px; }
.c-c { width: 18px; }
.c-d { width: 67px; }
.c-e { width: 134px; }
.c-n { width: 41px; }
.c-w { width: 42px; }

tr { height: 14px; }
th, td { padding: 0; }
th {
  background: #e0dedc;
  border-right: 1px solid #bdbbb9;
  border-bottom: 1px solid #bdbbb9;
  color: #555;
  font-weight: 400;
}
th.corner { background: #f6f5f4; border: 0; }
th.sel {
  background: #3584e4;
  border-color: #2f76cc;
  color: #fff;
  font-weight: 700;
}
.banner { height: 26px; }
.title {
  position: relative;
  background: #0f766e;
  color: #fff;
  font-size: 14px;
  line-height: 18px;
  font-weight: 700;
  text-align: center;
  border: solid #fff;
  border-width: 1px 1px 2px 0;
}
/* Selection outline and its fill handle */
.title::after {
  content: "";
  position: absolute;
  inset: 0 -1px -2px 0;
  border: solid #777;
  border-width: 0 1px 1px 0;
}
.title::before {
  content: "";
  position: absolute;
  right: -2px;
  bottom: -3px;
  width: 3px;
  height: 3px;
  background: #444;
}
.heads th, .heads td { border-bottom: 1px solid #444; }
.head {
  background: #0f766e;
  color: #fff;
  font-size: 10px;
  font-weight: 700;
  text-align: center;
  border-right: 1px solid #cfd4d6;
}
.records tr { height: 39px; }
.records tr:nth-child(2), .records tr:nth-child(4),
.records tr:nth-child(7), .records tr:nth-child(9) { height: 38px; }
.cell {
  color: #374151;
  font-family: "Open Sans", "Noto Sans", sans-serif;
  line-height: 13px;
  white-space: nowrap;
  border-right: 1px solid #d1d5db;
  border-bottom: 1px solid #d1d5db;
}
.code { text-align: center; border-left: 1px solid #d1d5db; }
.records tr:nth-child(odd) .cell { background: #f0fdfa; }
.blank tr:nth-child(3n) { height: 13px; }

u {
  text-decoration: underline wavy #e03030 1px;
  text-decoration-skip-ink: none;
  text-underline-offset: -1px;
}

/* Scroll bars */
.vscroll { width: 9px; flex: none; padding: 2px; background: #cdcdcd; }
.vscroll .thumb { height: 47%; border-radius: 3px; background: #7f8180; }
.hscroll {
  flex: none;
  height: 10px;
  margin-right: 9px;
  padding: 2px;
  display: flex;
  justify-content: space-between;
  background: #cdcdcd;
}
.hscroll .thumb { width: 46%; border-radius: 3px; background: #7f8180; }
.stop { width: 2px; background: #555; }

/* Sheet tabs */
.tabs {
  flex: none;
  height: 16px;
  display: flex;
  align-items: stretch;
  padding-left: 5px;
  font-size: 8px;
}
.arrows svg { width: 62px; height: 14px; stroke: #cfcdcb; }
.add { margin: 0 1px 0 8px; }
.tab { padding: 0 10px; border-right: 1px solid #d5d3d1; }
.tab.current {
  padding: 0 8px;
  background: #fff;
  border-right: 0;
  border-bottom: 2px solid #8d8f8e;
  font-weight: 700;
}

.sidebar {
  position: relative;
  flex: none;
  width: 39px;
  border-left: 1px solid #d5d3d1;
  padding-left: 2px;
  display: flex;
  flex-direction: column;
  align-items: center;
  gap: 5px;
}
.sidebar button { width: 24px; height: 24px; display: grid; place-items: center; }
.sidebar .settings { height: 27px; }
.sidebar .fx { font-size: 17px; }
.handle {
  position: absolute;
  left: -1px;
  top: 268px;
  width: 5px;
  height: 50px;
  display: grid;
  place-items: center start;
  background: #919392;
}
.handle::before {
  content: "";
  border: solid transparent;
  border-width: 2px 0 2px 3px;
  border-left-color: #fff;
}

/* Status bar */
.status {
  flex: none;
  height: 17px;
  display: grid;
  grid-template-columns: 175fr 218fr 216fr 168fr 44fr 31fr 20fr 20fr 180fr 95fr 33fr;
  align-items: stretch;
  border-top: 1px solid #d5d3d1;
  font-size: 8px;
}
.status > span {
  display: flex;
  align-items: center;
  padding-left: 6px;
  border-right: 1px solid #e2e0de;
  white-space: nowrap;
  min-width: 0;
}
.status > span:last-child { border: 0; }
.status .mid { justify-content: center; padding: 0; }
.status .sheets { gap: 7px; padding-left: 4px; }
.status .mode svg { width: 24px; height: 14px; }
.zoom { gap: 2px; }
.zoom button { font-size: 14px; font-weight: 700; width: 10px; }
.zoom input {
  appearance: none;
  flex: 1;
  height: 10px;
  background: linear-gradient(#999, #999) center / 100% 1px no-repeat;
}
.zoom input::-webkit-slider-thumb {
  appearance: none;
  width: 3px;
  height: 7px;
  border: 1px solid #444;
  background: #fff;
}
```
